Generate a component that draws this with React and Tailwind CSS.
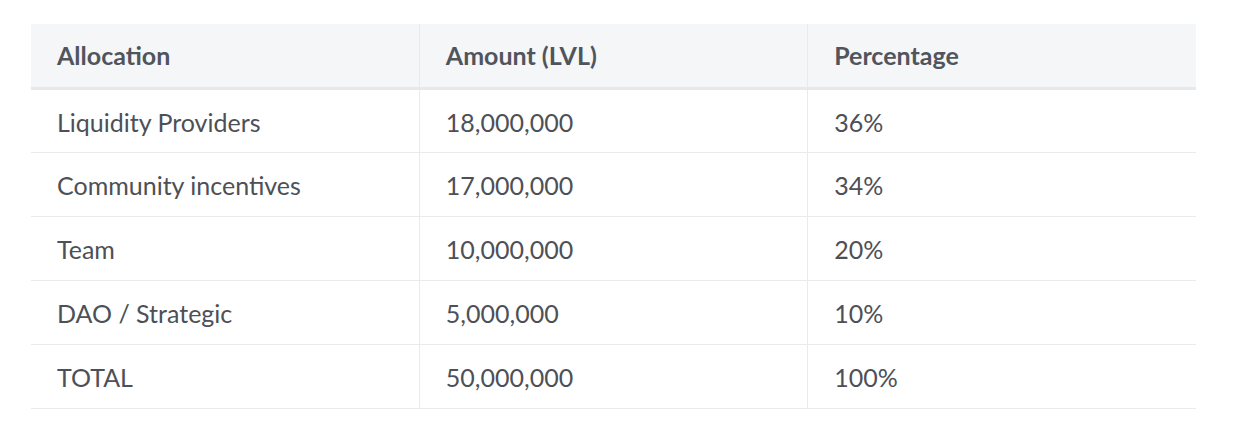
import React from 'react';

const rows = [
  { name: 'Liquidity Providers', amount: '18,000,000', pct: '36%' },
  { name: 'Community incentives', amount: '17,000,000', pct: '34%' },
  { name: 'Team', amount: '10,000,000', pct: '20%' },
  { name: 'DAO / Strategic', amount: '5,000,000', pct: '10%' },
  { name: 'TOTAL', amount: '50,000,000', pct: '100%' },
];

const App = () => {
  return (
    <div
      className="min-h-screen bg-white pt-[24px] pl-[31px]"
      style={{ fontFamily: 'Lato, "Open Sans", sans-serif' }}
    >
      <table className="w-[1165px] table-fixed border-collapse text-[25px]">
        <thead>
          <tr className="bg-[#f5f6f8] border-b-[3px] border-[#e6e8eb]">
            <th className="h-[64px] px-[26px] text-left font-bold text-[#50555d]">Allocation</th>
            <th className="h-[64px] px-[26px] text-left font-bold text-[#50555d] border-l border-[#e8eaed]">
              Amount (LVL)
            </th>
            <th className="h-[64px] px-[26px] text-left font-bold text-[#50555d] border-l border-[#e8eaed]">
              Percentage
            </th>
          </tr>
        </thead>
        <tbody>
          {rows.map(row => (
            <tr key={row.name} className="border-b border-[#e8eaed]">
              <td className="h-[64px] px-[26px] pt-[4px] text-[#4d5056]">{row.name}</td>
              <td className="h-[64px] px-[26px] pt-[4px] text-[#4d5056] border-l border-[#e8eaed]">{row.amount}</td>
              <td className="h-[64px] px-[26px] pt-[4px] text-[#4d5056] border-l border-[#e8eaed]">{row.pct}</td>
            </tr>
          ))}
        </tbody>
      </table>
    </div>
  );
};

export default App;
